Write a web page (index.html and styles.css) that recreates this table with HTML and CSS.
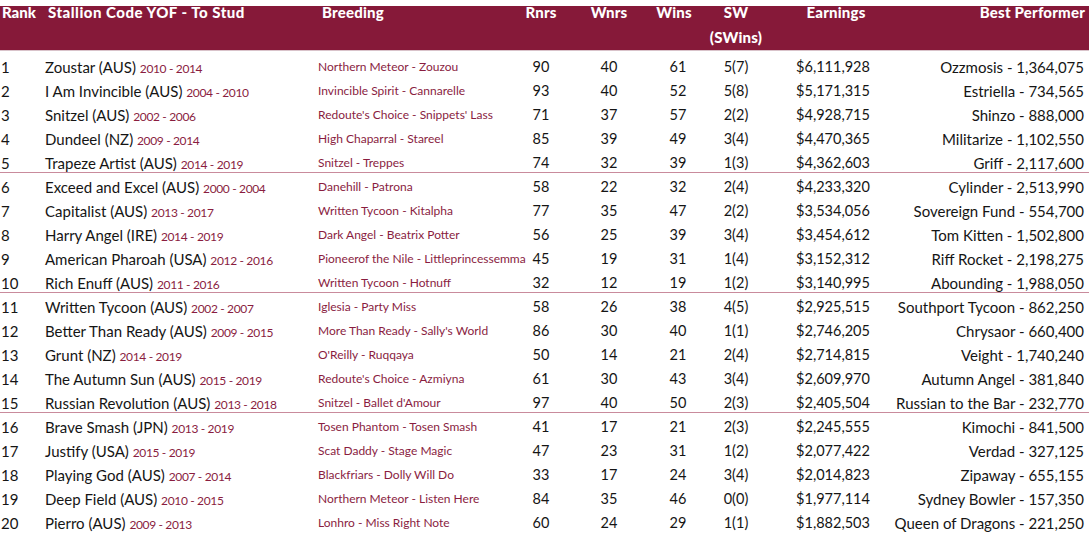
FILE: index.html
```html
<!DOCTYPE html>
<html lang="en">
<head>
<meta charset="utf-8">
<title>Leading Sires</title>
<link rel="stylesheet" href="styles.css">
</head>
<body>
<div class="table">
  <div class="thead">
    <div class="hc c-rank">Rank</div>
    <div class="hc c-name">Stallion Code YOF - To Stud</div>
    <div class="hc c-breed">Breeding</div>
    <div class="hc c-num">Rnrs</div>
    <div class="hc c-num">Wnrs</div>
    <div class="hc c-num c-wins">Wins</div>
    <div class="hc c-num"><span class="hl">SW</span><span class="hl hl2">(SWins)</span></div>
    <div class="hc c-num c-earn">Earnings</div>
    <div class="hc c-best">Best Performer</div>
  </div>
  <div class="tbody">
    <div class="row"><div class="c-rank">1</div><div class="c-name">Zoustar (AUS) <span class="yr">2010 - 2014</span></div><div class="c-breed">Northern Meteor - Zouzou</div><div class="c-num">90</div><div class="c-num">40</div><div class="c-num">61</div><div class="c-num">5(7)</div><div class="c-num">$6,111,928</div><div class="c-best">Ozzmosis - 1,364,075</div></div>
    <div class="row"><div class="c-rank">2</div><div class="c-name">I Am Invincible (AUS) <span class="yr">2004 - 2010</span></div><div class="c-breed">Invincible Spirit - Cannarelle</div><div class="c-num">93</div><div class="c-num">40</div><div class="c-num">52</div><div class="c-num">5(8)</div><div class="c-num">$5,171,315</div><div class="c-best">Estriella - 734,565</div></div>
    <div class="row"><div class="c-rank">3</div><div class="c-name">Snitzel (AUS) <span class="yr">2002 - 2006</span></div><div class="c-breed">Redoute's Choice - Snippets' Lass</div><div class="c-num">71</div><div class="c-num">37</div><div class="c-num">57</div><div class="c-num">2(2)</div><div class="c-num">$4,928,715</div><div class="c-best">Shinzo - 888,000</div></div>
    <div class="row"><div class="c-rank">4</div><div class="c-name">Dundeel (NZ) <span class="yr">2009 - 2014</span></div><div class="c-breed">High Chaparral - Stareel</div><div class="c-num">85</div><div class="c-num">39</div><div class="c-num">49</div><div class="c-num">3(4)</div><div class="c-num">$4,470,365</div><div class="c-best">Militarize - 1,102,550</div></div>
    <div class="row end"><div class="c-rank">5</div><div class="c-name">Trapeze Artist (AUS) <span class="yr">2014 - 2019</span></div><div class="c-breed">Snitzel - Treppes</div><div class="c-num">74</div><div class="c-num">32</div><div class="c-num">39</div><div class="c-num">1(3)</div><div class="c-num">$4,362,603</div><div class="c-best">Griff - 2,117,600</div></div>
    <div class="row"><div class="c-rank">6</div><div class="c-name">Exceed and Excel (AUS) <span class="yr">2000 - 2004</span></div><div class="c-breed">Danehill - Patrona</div><div class="c-num">58</div><div class="c-num">22</div><div class="c-num">32</div><div class="c-num">2(4)</div><div class="c-num">$4,233,320</div><div class="c-best">Cylinder - 2,513,990</div></div>
    <div class="row"><div class="c-rank">7</div><div class="c-name">Capitalist (AUS) <span class="yr">2013 - 2017</span></div><div class="c-breed">Written Tycoon - Kitalpha</div><div class="c-num">77</div><div class="c-num">35</div><div class="c-num">47</div><div class="c-num">2(2)</div><div class="c-num">$3,534,056</div><div class="c-best">Sovereign Fund - 554,700</div></div>
    <div class="row"><div class="c-rank">8</div><div class="c-name">Harry Angel (IRE) <span class="yr">2014 - 2019</span></div><div class="c-breed">Dark Angel - Beatrix Potter</div><div class="c-num">56</div><div class="c-num">25</div><div class="c-num">39</div><div class="c-num">3(4)</div><div class="c-num">$3,454,612</div><div class="c-best">Tom Kitten - 1,502,800</div></div>
    <div class="row"><div class="c-rank">9</div><div class="c-name">American Pharoah (USA) <span class="yr">2012 - 2016</span></div><div class="c-breed">Pioneerof the Nile - Littleprincessemma</div><div class="c-num">45</div><div class="c-num">19</div><div class="c-num">31</div><div class="c-num">1(4)</div><div class="c-num">$3,152,312</div><div class="c-best">Riff Rocket - 2,198,275</div></div>
    <div class="row end"><div class="c-rank">10</div><div class="c-name">Rich Enuff (AUS) <span class="yr">2011 - 2016</span></div><div class="c-breed">Written Tycoon - Hotnuff</div><div class="c-num">32</div><div class="c-num">12</div><div class="c-num">19</div><div class="c-num">1(2)</div><div class="c-num">$3,140,995</div><div class="c-best">Abounding - 1,988,050</div></div>
    <div class="row"><div class="c-rank">11</div><div class="c-name">Written Tycoon (AUS) <span class="yr">2002 - 2007</span></div><div class="c-breed">Iglesia - Party Miss</div><div class="c-num">58</div><div class="c-num">26</div><div class="c-num">38</div><div class="c-num">4(5)</div><div class="c-num">$2,925,515</div><div class="c-best">Southport Tycoon - 862,250</div></div>
    <div class="row"><div class="c-rank">12</div><div class="c-name">Better Than Ready (AUS) <span class="yr">2009 - 2015</span></div><div class="c-breed">More Than Ready - Sally's World</div><div class="c-num">86</div><div class="c-num">30</div><div class="c-num">40</div><div class="c-num">1(1)</div><div class="c-num">$2,746,205</div><div class="c-best">Chrysaor - 660,400</div></div>
    <div class="row"><div class="c-rank">13</div><div class="c-name">Grunt (NZ) <span class="yr">2014 - 2019</span></div><div class="c-breed">O'Reilly - Ruqqaya</div><div class="c-num">50</div><div class="c-num">14</div><div class="c-num">21</div><div class="c-num">2(4)</div><div class="c-num">$2,714,815</div><div class="c-best">Veight - 1,740,240</div></div>
    <div class="row"><div class="c-rank">14</div><div class="c-name">The Autumn Sun (AUS) <span class="yr">2015 - 2019</span></div><div class="c-breed">Redoute's Choice - Azmiyna</div><div class="c-num">61</div><div class="c-num">30</div><div class="c-num">43</div><div class="c-num">3(4)</div><div class="c-num">$2,609,970</div><div class="c-best">Autumn Angel - 381,840</div></div>
    <div class="row end"><div class="c-rank">15</div><div class="c-name">Russian Revolution (AUS) <span class="yr">2013 - 2018</span></div><div class="c-breed">Snitzel - Ballet d'Amour</div><div class="c-num">97</div><div class="c-num">40</div><div class="c-num">50</div><div class="c-num">2(3)</div><div class="c-num">$2,405,504</div><div class="c-best">Russian to the Bar - 232,770</div></div>
    <div class="row"><div class="c-rank">16</div><div class="c-name">Brave Smash (JPN) <span class="yr">2013 - 2019</span></div><div class="c-breed">Tosen Phantom - Tosen Smash</div><div class="c-num">41</div><div class="c-num">17</div><div class="c-num">21</div><div class="c-num">2(3)</div><div class="c-num">$2,245,555</div><div class="c-best">Kimochi - 841,500</div></div>
    <div class="row"><div class="c-rank">17</div><div class="c-name">Justify (USA) <span class="yr">2015 - 2019</span></div><div class="c-breed">Scat Daddy - Stage Magic</div><div class="c-num">47</div><div class="c-num">23</div><div class="c-num">31</div><div class="c-num">1(2)</div><div class="c-num">$2,077,422</div><div class="c-best">Verdad - 327,125</div></div>
    <div class="row"><div class="c-rank">18</div><div class="c-name">Playing God (AUS) <span class="yr">2007 - 2014</span></div><div class="c-breed">Blackfriars - Dolly Will Do</div><div class="c-num">33</div><div class="c-num">17</div><div class="c-num">24</div><div class="c-num">3(4)</div><div class="c-num">$2,014,823</div><div class="c-best">Zipaway - 655,155</div></div>
    <div class="row"><div class="c-rank">19</div><div class="c-name">Deep Field (AUS) <span class="yr">2010 - 2015</span></div><div class="c-breed">Northern Meteor - Listen Here</div><div class="c-num">84</div><div class="c-num">35</div><div class="c-num">46</div><div class="c-num">0(0)</div><div class="c-num">$1,977,114</div><div class="c-best">Sydney Bowler - 157,350</div></div>
    <div class="row"><div class="c-rank">20</div><div class="c-name">Pierro (AUS) <span class="yr">2009 - 2013</span></div><div class="c-breed">Lonhro - Miss Right Note</div><div class="c-num">60</div><div class="c-num">24</div><div class="c-num">29</div><div class="c-num">1(1)</div><div class="c-num">$1,882,503</div><div class="c-best">Queen of Dragons - 221,250</div></div>
  </div>
</div>
</body>
</html>
```
FILE: styles.css
```css
html, body {
  margin: 0;
  padding: 0;
  background: #ffffff;
}

body {
  font-family: Lato, "Liberation Sans", sans-serif;
  font-size: 15px;
  color: #151515;
  width: 1089px;
  overflow: hidden;
}

.table {
  padding-top: 6px;
}

.thead,
.row {
  display: grid;
  grid-template-columns: 44px 274px 202px 42px 94px 44px 72px 122px 1fr;
}

.thead {
  height: 44px;
  background: #861939;
  border-bottom: 1px solid #d9c3ca;
  color: #ffffff;
  font-weight: 900;
  font-size: 15px;
  letter-spacing: 0.2px;
}

.hc {
  line-height: 12px;
  padding-top: 0;
  white-space: nowrap;
}

.hl {
  display: block;
}

.hl2 {
  margin-top: 13px;
}

.tbody {
  padding-top: 4px;
}

.row {
  height: 24px;
  line-height: 24px;
  white-space: nowrap;
}

.row.end {
  height: 21px;
  border-bottom: 1px solid #c98b9c;
  margin-bottom: 2px;
}

.c-rank {
  padding-left: 1px;
}

.thead .c-rank {
  padding-left: 2px;
  letter-spacing: 0;
}

.c-name {
  padding-left: 1px;
}

.thead .c-name {
  padding-left: 4px;
  letter-spacing: 0.5px;
}

.c-breed {
  font-size: 12px;
  color: #8a1d3f;
}

.thead .c-breed {
  font-size: 15px;
  color: #ffffff;
  padding-left: 4px;
}

.yr {
  font-size: 12px;
  letter-spacing: -0.35px;
  color: #8a1d3f;
}

.c-num {
  text-align: center;
  font-size: 14.5px;
}

.thead .c-num {
  font-size: 15px;
}

.thead .c-wins {
  padding-right: 8px;
}

.thead .c-earn {
  padding-left: 6px;
}

.c-best {
  text-align: right;
  padding-right: 5px;
}

.thead .c-best {
  padding-right: 4px;
}
```
